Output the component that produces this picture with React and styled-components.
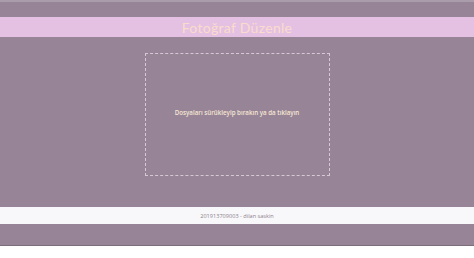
import React from "react";
import styled, { createGlobalStyle } from "styled-components";

const Global = createGlobalStyle`
  html, body { margin: 0; padding: 0; background: #ffffff; }
  body { font-family: "Open Sans", "DejaVu Sans", sans-serif; }
`;

const Page = styled.div`
  background: #978496;
  border-top: 2px solid #ab9cab;
  border-bottom: 1px solid #7d6e7c;
  padding: 15px 0 21px;
  display: flex;
  flex-direction: column;
  align-items: stretch;
`;

const Header = styled.header`
  height: 20px;
  background: #e4c1e2;
  display: flex;
  align-items: center;
  justify-content: center;
`;

const Title = styled.h1`
  margin: 0;
  font-family: "Lato", "Open Sans", sans-serif;
  font-weight: 400;
  font-size: 14px;
  letter-spacing: 0.3px;
  color: #fbdccc;
`;

const Main = styled.main`
  display: flex;
  justify-content: center;
  padding: 16px 0 31px;
`;

const DropZone = styled.div`
  width: 183px;
  height: 121px;
  border: 1px dashed #d6c9d5;
  display: flex;
  align-items: center;
  justify-content: center;
  cursor: pointer;
`;

const DropText = styled.p`
  margin: 0 0 4px;
  font-family: "Open Sans", sans-serif;
  font-size: 6.2px;
  font-weight: 600;
  color: #f6e6d4;
`;

const Footer = styled.footer`
  height: 17px;
  background: #f8f8fa;
  display: flex;
  align-items: center;
  justify-content: center;
`;

const FooterText = styled.span`
  font-family: "Open Sans", sans-serif;
  font-size: 5.6px;
  color: #8d7f8d;
`;

export default function App() {
  return (
    <>
      <Global />
      <Page>
        <Header>
          <Title>Fotoğraf Düzenle</Title>
        </Header>
        <Main>
          <DropZone>
            <DropText>Dosyaları sürükleyip bırakın ya da tıklayın</DropText>
          </DropZone>
        </Main>
        <Footer>
          <FooterText>201913709003 - dilan saskin</FooterText>
        </Footer>
      </Page>
    </>
  );
}
